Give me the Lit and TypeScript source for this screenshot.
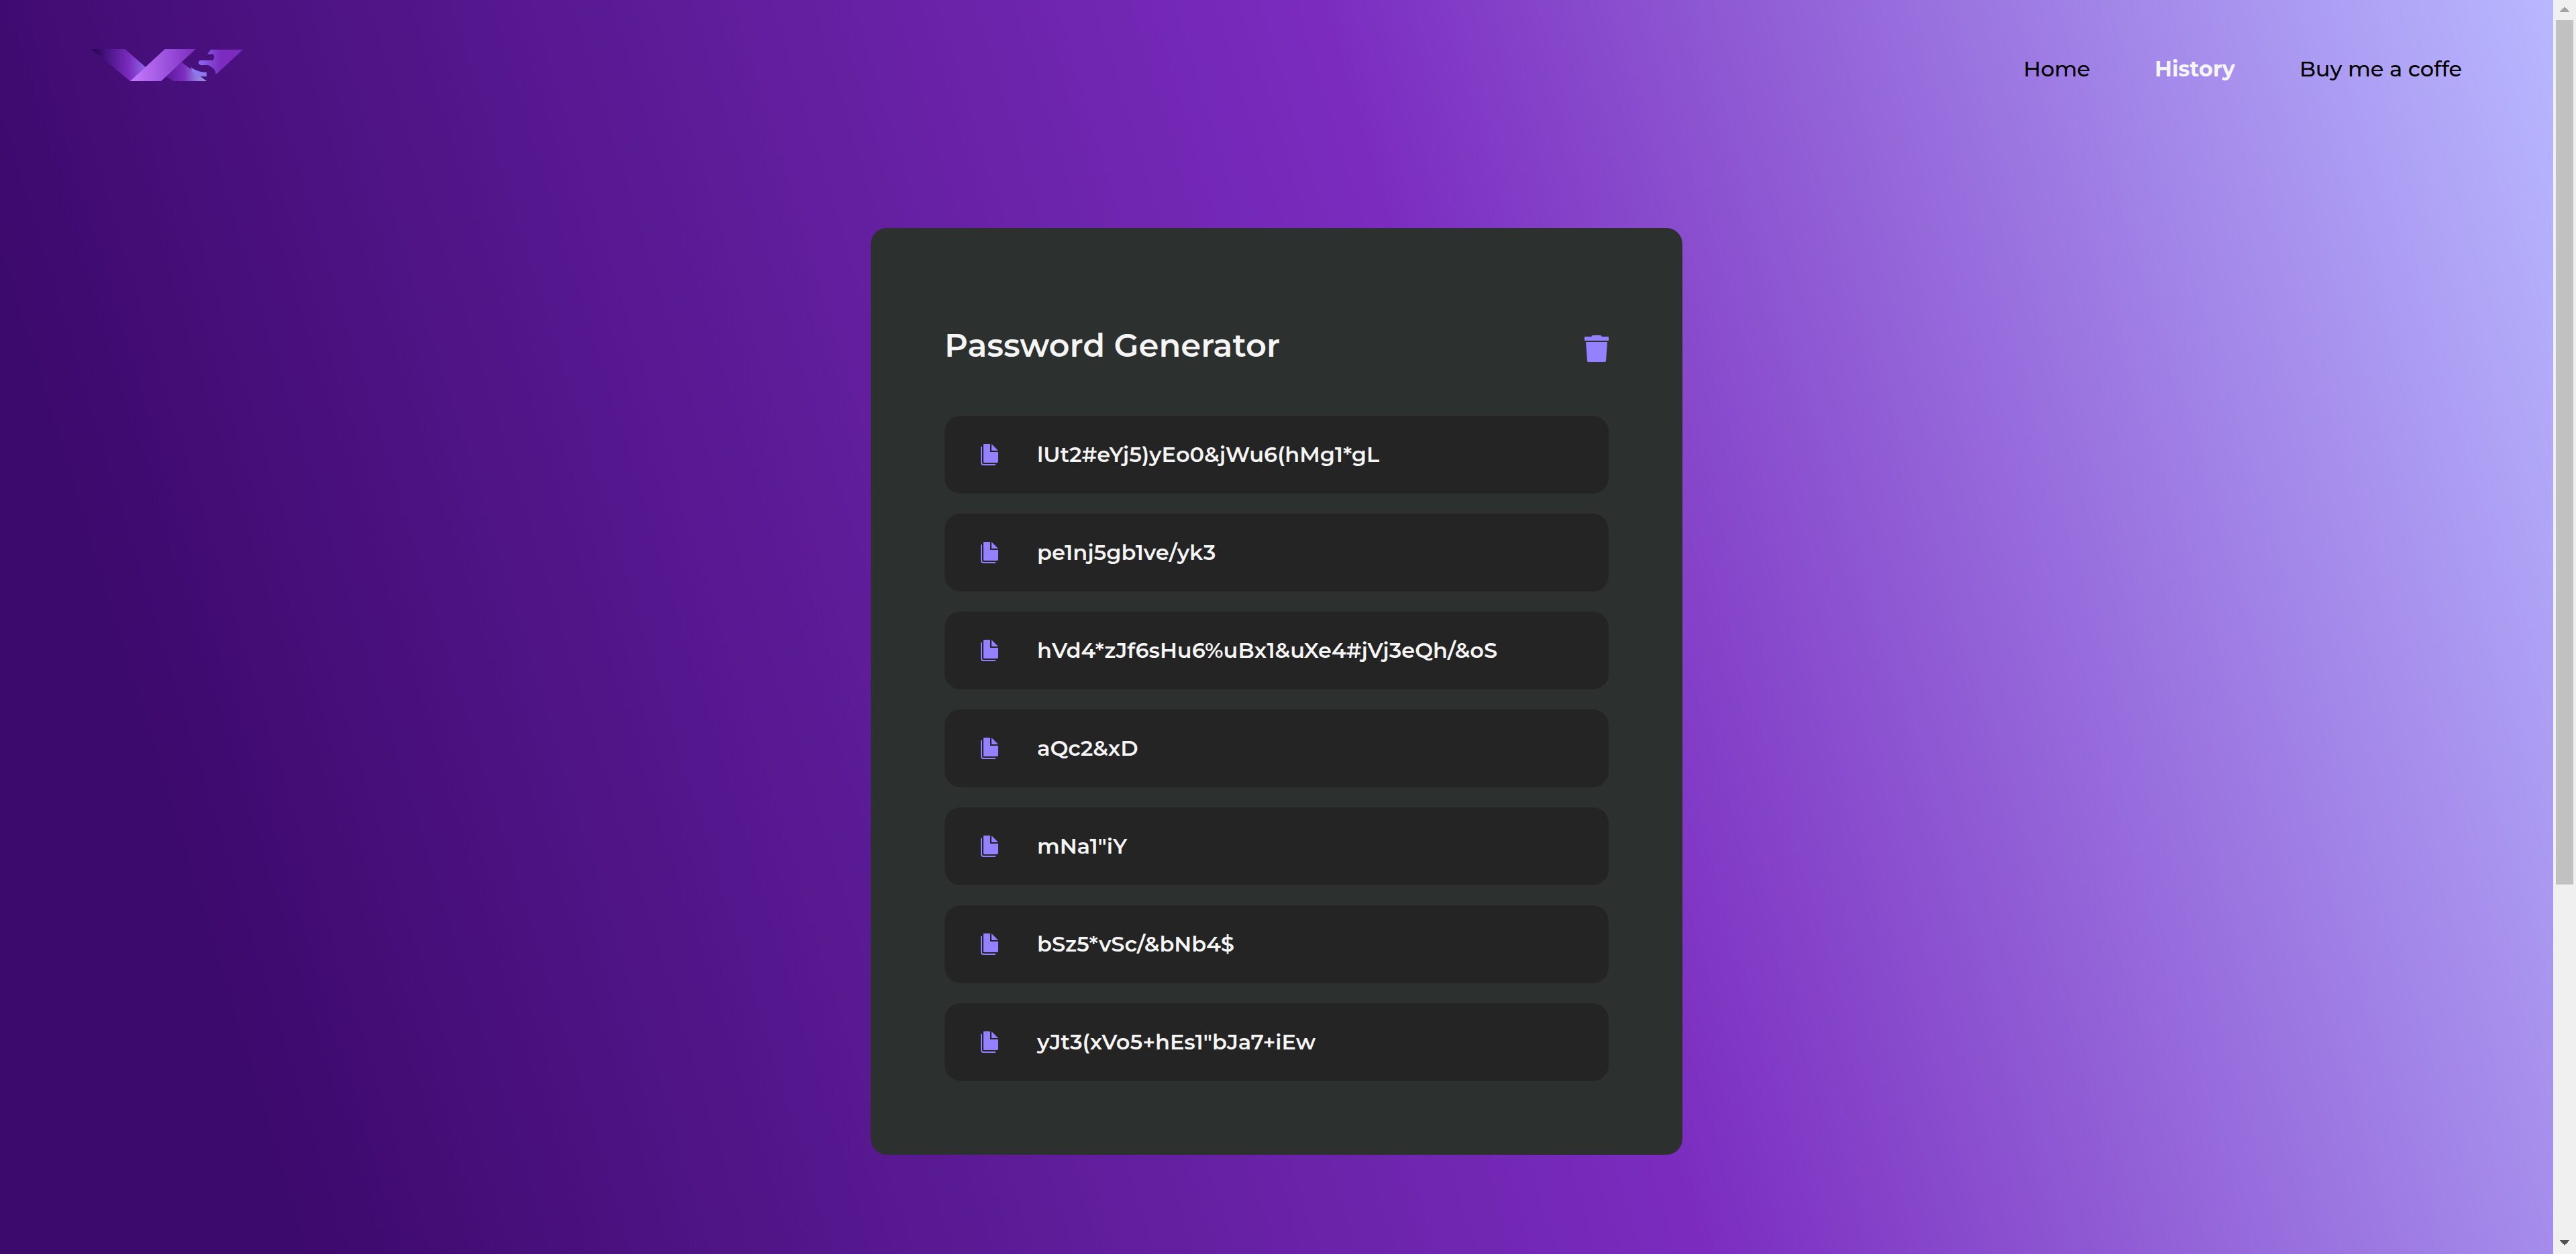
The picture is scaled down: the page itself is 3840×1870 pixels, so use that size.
import { LitElement, html, css, svg } from "lit";
import { customElement, property, state } from "lit/decorators.js";

const icons = {
  trash: svg`<path d="M12 0h12l2 2h10v6H0V2h10l2-2z"/><path d="M2 10h32l-2 28q-.2 2-2 2H6q-2 0-2-2L2 10z"/>`,
  copy: svg`<path d="M5 0h9v12h12v14q0 2-2 2H5q-1 0-1-1V1q0-1 1-1z"/><path d="M16 0l10 10H16V0z"/><path d="M0 4h2v24q0 2 2 2h18v2H4q-4 0-4-4V4z"/>`,
};

@customElement("site-logo")
export class SiteLogo extends LitElement {
  static styles = css`
    :host { display: block; }
    .mark { display: block; width: 226px; height: 50px; }
  `;
  render() {
    return html`
      <svg class="mark" viewBox="0 0 226 50" role="img" aria-label="VS">
        <defs>
          <linearGradient id="left"><stop offset="0" stop-color="#240046"/><stop offset=".3" stop-color="#4a1487"/><stop offset=".7" stop-color="#7b2cbf"/><stop offset="1" stop-color="#9068e8"/></linearGradient>
          <linearGradient id="mid"><stop offset="0" stop-color="#c77dff"/><stop offset=".5" stop-color="#a055e0"/><stop offset="1" stop-color="#7b2cbf"/></linearGradient>
          <linearGradient id="low"><stop offset="0" stop-color="#5a189a"/><stop offset=".45" stop-color="#7b2cbf"/><stop offset=".75" stop-color="#9478dc"/><stop offset="1" stop-color="#9a94e4"/></linearGradient>
          <linearGradient id="right"><stop offset="0" stop-color="#8a68f0"/><stop offset=".5" stop-color="#7b2cbf"/><stop offset="1" stop-color="#7b2cbf"/></linearGradient>
        </defs>
        <path fill="url(#left)" d="M0 0h50l31 27-23 21z"/>
        <path fill="url(#low)" d="M135 20l37 28h-49l-13-8z"/>
        <path fill="url(#mid)" d="M110 0h46l-52 48H58z"/>
        <path fill="#8d78f2" d="M148 27q9 7 24 8v6h-10q-9 0-14-14z"/>
        <path fill="url(#right)" d="M178 1h48l-40 37q-1-10-12-14h-11q-3-1-3-4t4-3h17q4-3 1-9h-9z"/>
      </svg>
    `;
  }
}

@customElement("site-header")
export class SiteHeader extends LitElement {
  @property() current = "";
  private links = ["Home", "History", "Buy me a coffe"];

  static styles = css`
    :host { display: block; }
    .bar { display: flex; align-items: flex-start; justify-content: space-between; padding: 73px 136px 0; }
    .links { display: flex; gap: 96px; }
    .link { color: #000; font-size: 32px; line-height: 60px; font-weight: 500; text-decoration: none; white-space: nowrap; }
    .current { color: #f5f5f5; font-weight: 700; }
  `;
  render() {
    return html`
      <header class="bar">
        <site-logo></site-logo>
        <nav class="links">
          ${this.links.map((name) => html`<a class="link ${name === this.current ? "current" : ""}" href="#">${name}</a>`)}
        </nav>
      </header>
    `;
  }
}

@customElement("password-row")
export class PasswordRow extends LitElement {
  @property() value = "";

  static styles = css`
    :host { display: flex; align-items: center; gap: 58px; height: 116px; padding: 0 54px; border-radius: 24px; background: #242424; box-sizing: border-box; }
    .copy { display: block; padding: 0; border: 0; background: none; cursor: pointer; }
    .icon { display: block; width: 26px; height: 32px; fill: #9381ff; }
    .value { font-size: 32px; line-height: 40px; font-weight: 600; color: #f5f5f5; white-space: nowrap; }
  `;
  render() {
    return html`
      <button class="copy" aria-label="Copy" @click=${() => navigator.clipboard?.writeText(this.value)}>
        <svg class="icon" viewBox="0 0 26 32">${icons.copy}</svg>
      </button>
      <span class="value">${this.value}</span>
    `;
  }
}

@customElement("app-root")
export class AppRoot extends LitElement {
  @state() private passwords = [
    "lUt2#eYj5)yEo0&jWu6(hMg1*gL",
    "pe1nj5gb1ve/yk3",
    "hVd4*zJf6sHu6%uBx1&uXe4#jVj3eQh/&oS",
    "aQc2&xD",
    'mNa1"iY',
    "bSz5*vSc/&bNb4$",
    'yJt3(xVo5+hEs1"bJa7+iEw',
  ];

  static styles = css`
    :host { display: flex; height: 100vh; font-family: Montserrat, Inter, sans-serif; }
    .page { flex: 1; min-width: 0; overflow: hidden; background: linear-gradient(73deg, #3c096c 10%, #7b2cbf 58%, #b8b8ff 100%); }
    .card { box-sizing: border-box; max-width: 1210px; margin: 207px auto 0; padding: 110px; border-radius: 24px; background: #2c302e; }
    .head { display: flex; align-items: center; justify-content: space-between; height: 130px; margin-bottom: 40px; }
    .title { margin: 0; font-size: 48px; line-height: 60px; font-weight: 600; color: #f5f5f5; }
    .clear { display: block; padding: 10px 0 0; border: 0; background: none; cursor: pointer; }
    .icon { display: block; width: 36px; height: 40px; fill: #9381ff; }
    .list { display: grid; gap: 30px; }
    .track { display: flex; flex-direction: column; align-items: center; width: 34px; background: #f0f0f0; }
    .arrow { display: block; width: 34px; height: 30px; fill: #a3a3a3; }
    .down { fill: #505050; }
    .rail { flex: 1; width: 26px; }
    .thumb { height: 71.2%; background: #c1c1c1; }
  `;
  render() {
    return html`
      <div class="page">
        <site-header current="History"></site-header>
        <main class="card">
          <div class="head">
            <h1 class="title">Password Generator</h1>
            <button class="clear" aria-label="Clear history" @click=${() => (this.passwords = [])}>
              <svg class="icon" viewBox="0 0 36 40">${icons.trash}</svg>
            </button>
          </div>
          <div class="list">
            ${this.passwords.map((value) => html`<password-row .value=${value}></password-row>`)}
          </div>
        </main>
      </div>
      <div class="track" aria-hidden="true">
        <svg class="arrow" viewBox="0 0 34 30"><path d="M10 18v-2h2v-2h2v-2h2v-2h2v2h2v2h2v2h2v2z"/></svg>
        <div class="rail"><div class="thumb"></div></div>
        <svg class="arrow down" viewBox="0 0 34 30"><path d="M10 9h14v2h-2v2h-2v2h-2v2h-2v-2h-2v-2h-2v-2h-2z"/></svg>
      </div>
    `;
  }
}
